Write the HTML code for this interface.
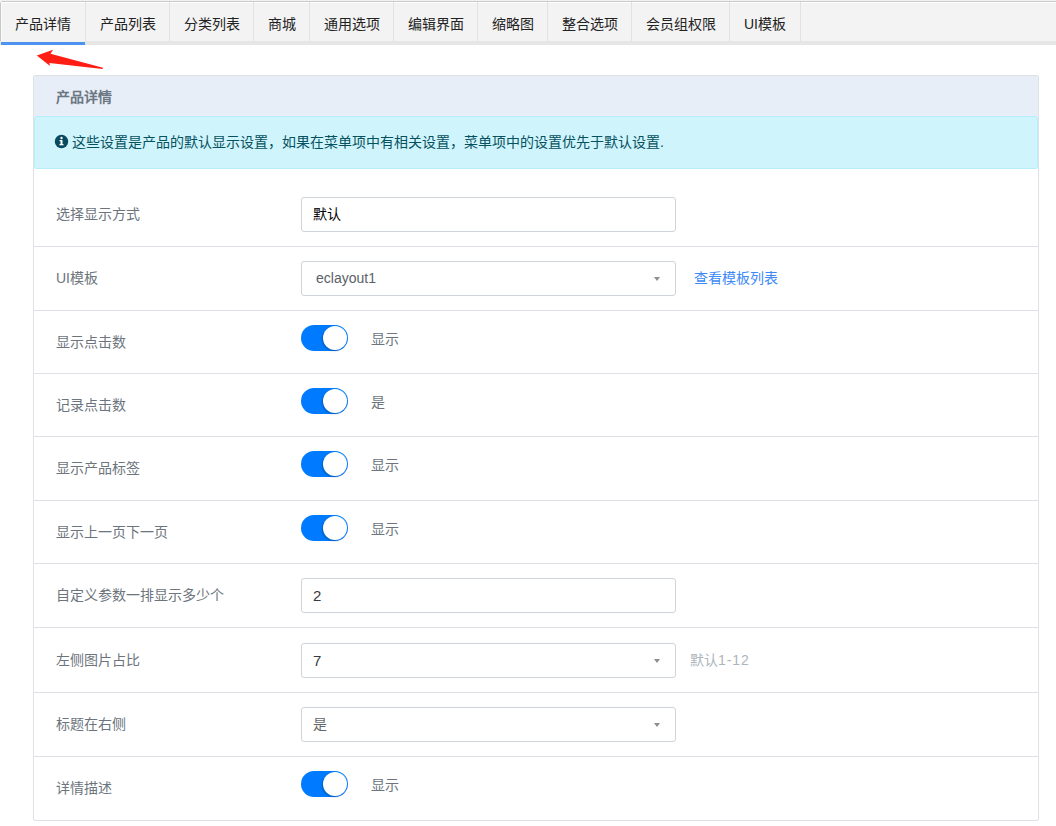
<!DOCTYPE html>
<html lang="zh-CN"><head><meta charset="utf-8">
<style>
*{box-sizing:border-box;margin:0;padding:0}
html,body{width:1056px;height:826px;overflow:hidden;background:#fff;font-family:"Liberation Sans",sans-serif;font-size:14px;color:#212529}
.abs{position:absolute}
#tabs{position:absolute;left:0;top:1px;width:1060px;height:44px;background:#f3f3f3;border-top:1px solid #cbcbcb;border-left:1px solid #c8c8c8;border-top-left-radius:3px;}
#tabs .hl{position:absolute;left:0;top:0;right:0;height:1px;background:#fff}
#tabs .hlv{position:absolute;left:0;top:0;width:1px;height:40px;background:#fafafa}
#tabs .bb{position:absolute;left:-1px;top:39px;right:0;height:4px;background:#e6e6e6}
#tabs .act{position:absolute;left:0;top:39px;width:84px;height:4px;background:linear-gradient(#f3f1ec 1px,#4d94f0 1px)}
#top0{position:absolute;left:0;top:0;width:1056px;height:1px;background:#f0f1f4}
.tab{position:absolute;top:2px;height:38px;line-height:40px;text-align:center;color:#222;font-size:14px}
.dv{position:absolute;top:0px;width:1px;height:39px;background:#e2e2e2}
#card{position:absolute;left:33px;top:75px;width:1006px;height:746px;border:1px solid #dee2e6;border-radius:2px}
#hdr{position:absolute;left:0;top:0;width:1004px;height:40px;background:#e8eef7;color:#6b7784;font-weight:bold;font-size:14px;line-height:42px;padding-left:22px}
#alert{position:absolute;left:0;top:40px;width:1004px;height:53px;background:#cff4fc;border:1px solid #b6effb;border-radius:2px;color:#055160;font-size:14px;line-height:51px;padding-left:37px}
.sep{position:absolute;left:0;width:1004px;height:1px;background:#dee2e6}
.lbl{position:absolute;left:22px;color:#6c757d;font-size:14px;line-height:20px}
.inp{position:absolute;left:267px;width:375px;height:35px;border:1px solid #ced4da;border-radius:3px;font-size:14px;line-height:33px;padding-left:11px;color:#495057}
.arr{position:absolute;left:351.5px;top:14.5px;width:0;height:0;border-left:3.5px solid transparent;border-right:3.5px solid transparent;border-top:4.5px solid #8a8f94}
.tg{position:absolute;left:267px;width:47px;height:26px;border-radius:13px;background:#007bff}
.tg .k{position:absolute;right:1px;top:1px;width:24px;height:24px;border-radius:12px;background:#fff;box-shadow:-1px 1px 2px rgba(0,0,0,.25)}
.tl{position:absolute;left:337px;color:#6c757d;font-size:14px;line-height:20px}
</style></head><body>
<div id="top0"></div><div id="tabs"><div class="hl"></div><div class="hlv"></div><div class="bb"></div><div class="act"></div>
<div class="tab" style="left:0;width:84px">产品详情</div>
<div class="dv" style="left:84px"></div>
<div class="tab" style="left:85px;width:83px">产品列表</div>
<div class="dv" style="left:168px"></div>
<div class="tab" style="left:169px;width:83px">分类列表</div>
<div class="dv" style="left:252px"></div>
<div class="tab" style="left:253px;width:55px">商城</div>
<div class="dv" style="left:308px"></div>
<div class="tab" style="left:309px;width:83px">通用选项</div>
<div class="dv" style="left:392px"></div>
<div class="tab" style="left:393px;width:83px">编辑界面</div>
<div class="dv" style="left:476px"></div>
<div class="tab" style="left:477px;width:69px">缩略图</div>
<div class="dv" style="left:546px"></div>
<div class="tab" style="left:547px;width:83px">整合选项</div>
<div class="dv" style="left:630px"></div>
<div class="tab" style="left:631px;width:97px">会员组权限</div>
<div class="dv" style="left:728px"></div>
<div class="tab" style="left:729px;width:70px">UI模板</div>
<div class="dv" style="left:799px"></div>
</div>
<svg class="abs" style="left:0;top:0" width="120" height="80"><path d="M36.8 55.4 L53.1 49.7 L50.5 53.8 L103 67.8 L102.6 69 L49.3 62.9 L50.1 66 Z" fill="#ff1e14"/></svg>
<div id="card">
<div id="hdr">产品详情</div>
<div id="alert"><svg class="abs" style="left:19px;top:17px" width="15" height="15" viewBox="0 0 15 15"><circle cx="7.5" cy="7.5" r="6.7" fill="#0a4a5e"/><rect x="6.5" y="6" width="2" height="5" fill="#fff"/><rect x="5.5" y="10" width="4" height="1.3" fill="#fff"/><rect x="5.5" y="6" width="2" height="1.2" fill="#fff"/><circle cx="7.5" cy="4" r="1.2" fill="#fff"/></svg>这些设置是产品的默认显示设置，如果在菜单项中有相关设置，菜单项中的设置优先于默认设置.</div>

<div class="lbl" style="top:128px">选择显示方式</div>
<div class="inp" style="top:121px;color:#000">默认</div>
<div class="sep" style="top:170px"></div>

<div class="lbl" style="top:192px">UI模板</div>
<div class="inp" style="top:185px;padding-left:14px;color:#5a6168">eclayout1<div class="arr"></div></div>
<div class="abs" style="left:660px;top:192px;line-height:20px;color:#3d8af7">查看模板列表</div>
<div class="sep" style="top:234px"></div>

<div class="lbl" style="top:256px">显示点击数</div>
<div class="tg" style="top:249px"><div class="k"></div></div>
<div class="tl" style="top:253px">显示</div>
<div class="sep" style="top:297px"></div>

<div class="lbl" style="top:319px">记录点击数</div>
<div class="tg" style="top:312px"><div class="k"></div></div>
<div class="tl" style="top:316px">是</div>
<div class="sep" style="top:360px"></div>

<div class="lbl" style="top:382px">显示产品标签</div>
<div class="tg" style="top:375px"><div class="k"></div></div>
<div class="tl" style="top:379px">显示</div>
<div class="sep" style="top:424px"></div>

<div class="lbl" style="top:446px">显示上一页下一页</div>
<div class="tg" style="top:439px"><div class="k"></div></div>
<div class="tl" style="top:443px">显示</div>
<div class="sep" style="top:487px"></div>

<div class="lbl" style="top:509px">自定义参数一排显示多少个</div>
<div class="inp" style="top:502px;color:#343a40"><span style="font-size:15px">2</span></div>
<div class="sep" style="top:551px"></div>

<div class="lbl" style="top:574px">左侧图片占比</div>
<div class="inp" style="top:567px;color:#343a40"><span style="font-size:15px">7</span><div class="arr"></div></div>
<div class="abs" style="left:656px;top:574px;line-height:20px;color:#adb5bd">默认<span style="letter-spacing:0.9px">1-12</span></div>
<div class="sep" style="top:616px"></div>

<div class="lbl" style="top:638px">标题在右侧</div>
<div class="inp" style="top:631px;color:#5f666d">是<div class="arr"></div></div>
<div class="sep" style="top:680px"></div>

<div class="lbl" style="top:702px">详情描述</div>
<div class="tg" style="top:695px"><div class="k"></div></div>
<div class="tl" style="top:699px">显示</div>
</div>
</body></html>
